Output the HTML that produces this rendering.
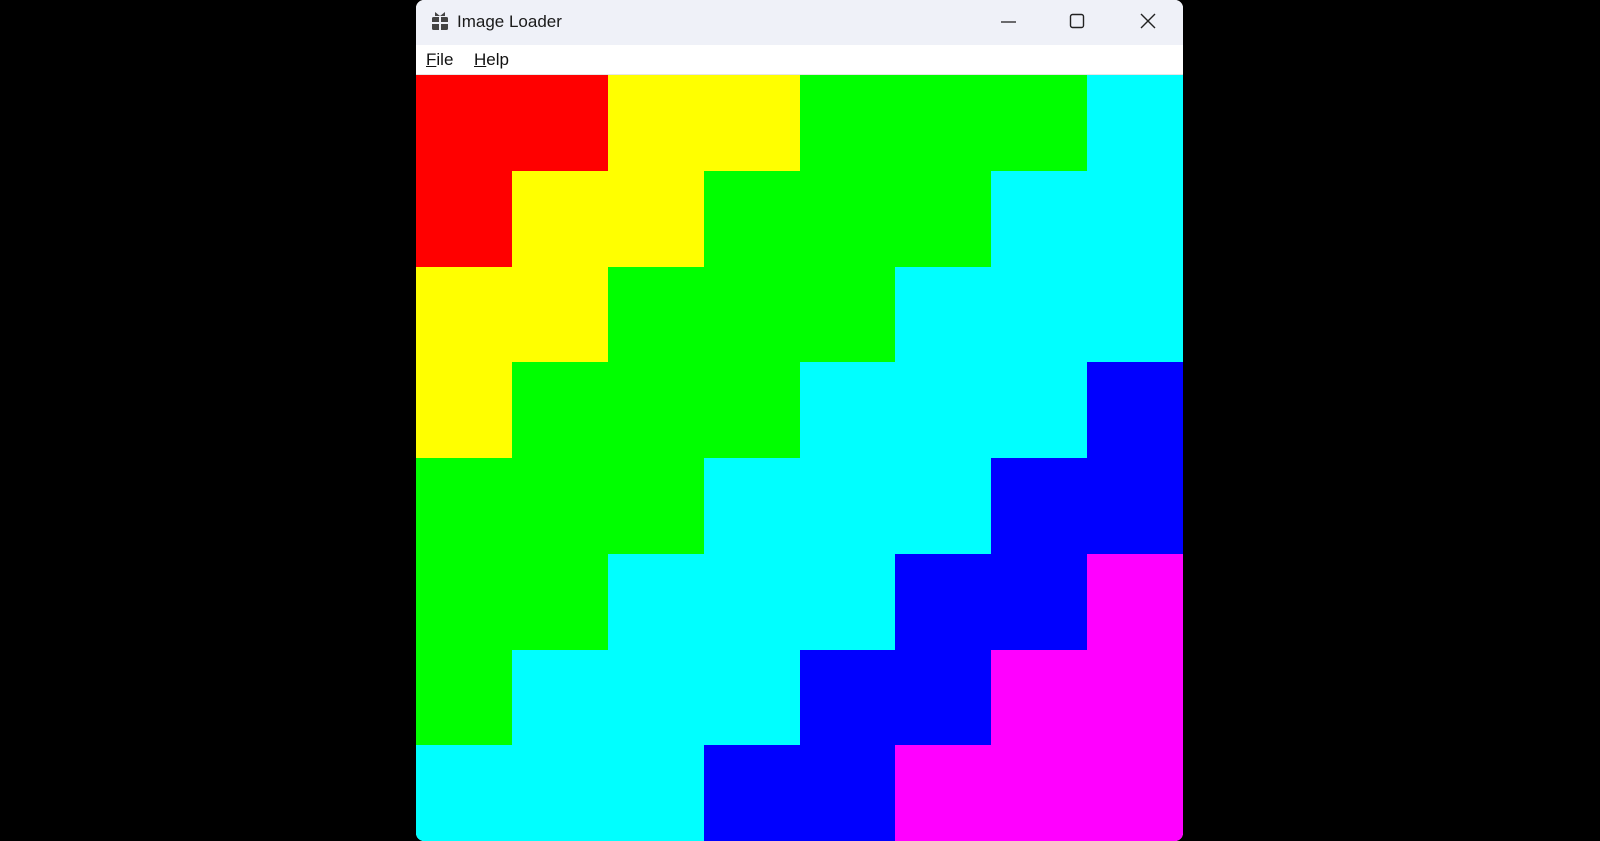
<!DOCTYPE html>
<html><head><style>
html,body{margin:0;padding:0;background:#000;width:1600px;height:841px;overflow:hidden;}
.win{position:absolute;left:416px;top:0;width:767px;height:841px;border-radius:8px;overflow:hidden;background:#fff;}
.title{height:45px;background:#eff1f8;position:relative;font-family:"Liberation Sans",sans-serif;}
.title .t{position:absolute;left:41px;top:12px;font-size:17px;color:#1a1a1a;}
.menu{height:29px;background:#fff;border-bottom:1px solid #e6e6e6;font-family:"Liberation Sans",sans-serif;font-size:17px;position:relative;}
.menu span{position:absolute;top:5px;color:#111;}
.grid{position:absolute;left:0;top:75px;width:767px;height:766px;display:grid;grid-template-columns:repeat(8,1fr);grid-template-rows:repeat(8,1fr);}
</style></head><body>
<div class="win">
<div class="title">
<svg style="position:absolute;left:15px;top:11px" width="18" height="20" viewBox="0 0 18 20"><path d="M4 1l5 4 5-4v4H4z" fill="#444"/><rect x="1" y="6" width="16" height="13" rx="1.5" fill="#444"/><rect x="8" y="6" width="2" height="13" fill="#eff1f8"/><rect x="1" y="11" width="16" height="2" fill="#eff1f8"/></svg>
<span class="t">Image Loader</span>
<svg style="position:absolute;left:584px;top:14px" width="20" height="20"><line x1="1" y1="8" x2="16" y2="8" stroke="#222" stroke-width="1.3"/></svg>
<svg style="position:absolute;left:653px;top:13px" width="20" height="20"><rect x="1.5" y="1.5" width="13" height="13" rx="2" fill="none" stroke="#222" stroke-width="1.4"/></svg>
<svg style="position:absolute;left:724px;top:13px" width="20" height="20"><path d="M1 1L15 15M15 1L1 15" stroke="#222" stroke-width="1.4"/></svg>
</div>
<div class="menu"><span style="left:10px"><u>F</u>ile</span><span style="left:58px"><u>H</u>elp</span></div>
<div class="grid" id="g"></div>
</div>
<script>
var c=['#f00','#f00','#ff0','#ff0','#0f0','#0f0','#0f0','#0ff','#0ff','#0ff','#00f','#00f','#f0f','#f0f','#f0f'];
var h='';for(var r=0;r<8;r++)for(var k=0;k<8;k++)h+='<div style="background:'+c[r+k]+'"></div>';
document.getElementById('g').innerHTML=h;
</script>
</body></html>
